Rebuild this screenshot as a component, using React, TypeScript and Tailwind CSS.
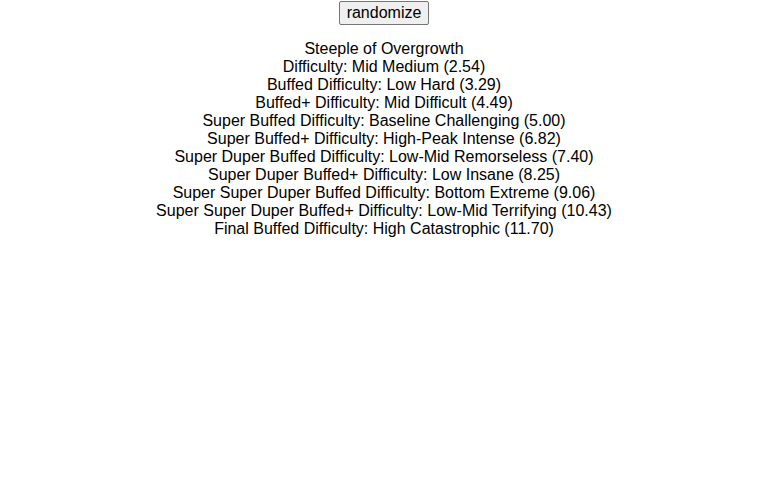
const lines = [
  'Steeple of Overgrowth',
  'Difficulty: Mid Medium (2.54)',
  'Buffed Difficulty: Low Hard (3.29)',
  'Buffed+ Difficulty: Mid Difficult (4.49)',
  'Super Buffed Difficulty: Baseline Challenging (5.00)',
  'Super Buffed+ Difficulty: High-Peak Intense (6.82)',
  'Super Duper Buffed Difficulty: Low-Mid Remorseless (7.40)',
  'Super Duper Buffed+ Difficulty: Low Insane (8.25)',
  'Super Super Duper Buffed Difficulty: Bottom Extreme (9.06)',
  'Super Super Duper Buffed+ Difficulty: Low-Mid Terrifying (10.43)',
  'Final Buffed Difficulty: High Catastrophic (11.70)',
]

export default function App() {
  return (
    <div className="min-h-[480px] bg-white text-black text-center font-['Liberation_Sans',Arial,sans-serif] text-base leading-[18px]">
      <div className="pt-[1px]">
        <button className="px-[7px] py-[2px] leading-[18px] bg-[#efefef] border border-[#767676] rounded-[2px] text-black">
          randomize
        </button>
      </div>
      <div className="mt-[15px]">
        {lines.map((l, i) => (
          <div key={i}>{l}</div>
        ))}
      </div>
    </div>
  )
}
